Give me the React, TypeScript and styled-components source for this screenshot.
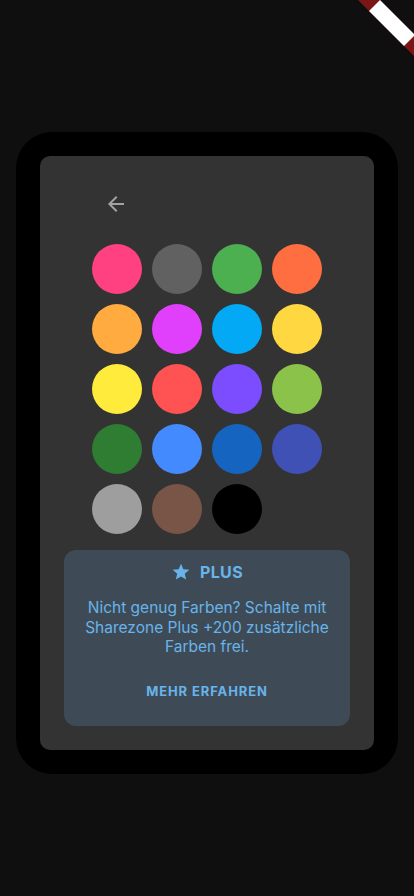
import React from "react";
import styled, { createGlobalStyle } from "styled-components";

const Global = createGlobalStyle`
  html, body { margin: 0; padding: 0; background: #0f0f0f; }
  body { font-family: "Inter", "Noto Sans", sans-serif; }
`;

const Screen = styled.div`
  position: relative;
  width: 414px;
  height: 896px;
  overflow: hidden;
  background: #0f0f0f;
  padding-top: 132px;
  box-sizing: border-box;
`;

const Frame = styled.div`
  margin: 0 16px;
  height: 642px;
  background: #000;
  border-radius: 36px;
  padding: 24px;
  box-sizing: border-box;
`;

const Panel = styled.div`
  height: 100%;
  background: #333333;
  border-radius: 10px;
  padding: 24px 24px 0;
  box-sizing: border-box;
  display: flex;
  flex-direction: column;
  align-items: center;
`;

const Header = styled.div`
  width: 230px;
  height: 48px;
  display: flex;
  align-items: center;
`;

const BackButton = styled.button`
  width: 48px;
  height: 48px;
  border: none;
  background: transparent;
  padding: 0;
  display: flex;
  align-items: center;
  justify-content: center;
  color: #a3a3a3;
`;

const Grid = styled.div`
  margin-top: 16px;
  width: 230px;
  display: grid;
  grid-template-columns: repeat(4, 50px);
  gap: 10px;
`;

const Swatch = styled.div<{ $c: string }>`
  width: 50px;
  height: 50px;
  border-radius: 50%;
  background: ${({ $c }) => $c};
`;

const Card = styled.div`
  margin-top: 16px;
  width: 286px;
  height: 176px;
  box-sizing: border-box;
  background: #3e4b57;
  border-radius: 12px;
  padding: 10px 16px 0;
  display: flex;
  flex-direction: column;
  align-items: center;
  color: #68b4ea;
`;

const Title = styled.div`
  display: flex;
  align-items: center;
  gap: 9px;
  height: 24px;
  font-size: 16px;
  font-weight: 700;
  letter-spacing: 0.4px;
`;

const Body = styled.p`
  margin: 14px 0 0;
  font-size: 15.5px;
  line-height: 19.5px;
  text-align: center;
`;

const MoreButton = styled.button`
  margin-top: 16px;
  height: 36px;
  padding: 0 12px;
  border: none;
  background: transparent;
  color: #68b4ea;
  font-family: inherit;
  font-size: 13px;
  font-weight: 700;
  letter-spacing: 0.9px;
`;

const Banner = styled.svg`
  position: absolute;
  top: 0;
  right: 0;
`;

const colors = [
  "#ff4081", "#616161", "#4caf50", "#ff6e40",
  "#ffab40", "#e040fb", "#03a9f4", "#ffd740",
  "#ffeb3b", "#ff5252", "#7c4dff", "#8bc34a",
  "#2e7d32", "#448aff", "#1565c0", "#3f51b5",
  "#9e9e9e", "#795548", "#000000",
];

export default function App() {
  return (
    <>
      <Global />
      <Screen>
        <Frame>
          <Panel>
            <Header>
              <BackButton aria-label="Zurück">
                <svg width="24" height="24" viewBox="0 0 24 24">
                  <path d="M20 11H7.83l5.59-5.59L12 4l-8 8 8 8 1.41-1.41L7.83 13H20v-2z" fill="currentColor" />
                </svg>
              </BackButton>
            </Header>
            <Grid>
              {colors.map((c) => (
                <Swatch key={c} $c={c} />
              ))}
            </Grid>
            <Card>
              <Title>
                <svg width="20" height="20" viewBox="0 0 24 24">
                  <path d="M12 17.27L18.18 21l-1.64-7.03L22 9.24l-7.19-.61L12 2 9.19 8.63 2 9.24l5.46 4.73L5.82 21z" fill="currentColor" />
                </svg>
                PLUS
              </Title>
              <Body>
                Nicht genug Farben? Schalte mit Sharezone Plus +200 zusätzliche Farben frei.
              </Body>
              <MoreButton>MEHR ERFAHREN</MoreButton>
            </Card>
          </Panel>
        </Frame>
        <Banner width="60" height="60" viewBox="0 0 60 60">
          <polygon points="4,0 60,56 60,34 26,0" fill="#7a1616" />
          <polygon points="15,11 26,0 61,35 50,46" fill="#ffffff" />
        </Banner>
      </Screen>
    </>
  );
}
